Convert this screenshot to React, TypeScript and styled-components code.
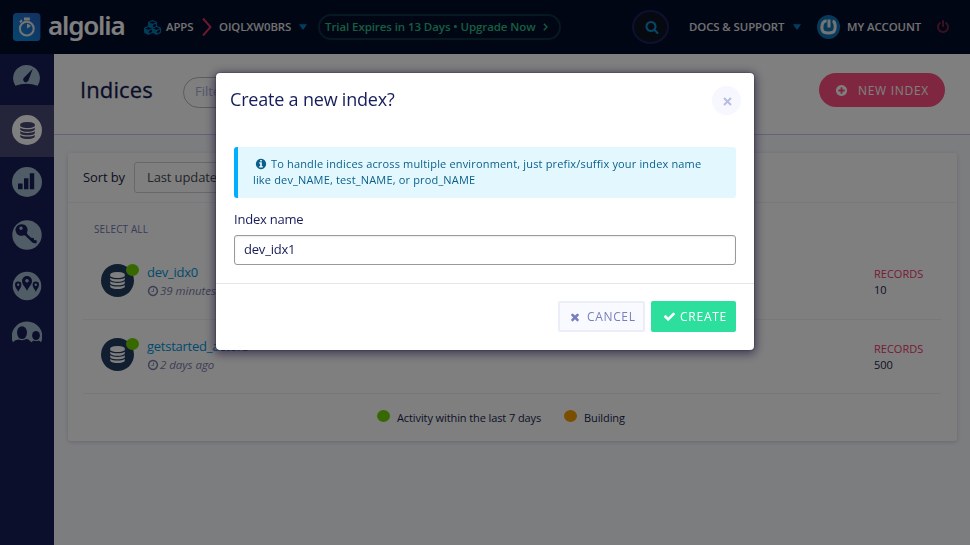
import React from "react";
import styled, { createGlobalStyle } from "styled-components";
import { FaCubes } from "react-icons/fa";

const GlobalStyle = createGlobalStyle`
  * { box-sizing: border-box; }
  body { margin: 0; font-family: "Open Sans", "Noto Sans", sans-serif; color: #21243d; overflow: hidden; }
  button, input { font-family: inherit; }
`;

/* ---------- icons ---------- */

const disc =
  "q0 209-103 385.5t-279.5 279.5-385.5 103-385.5-103-279.5-279.5-103-385.5 103-385.5 279.5-279.5 385.5-103 385.5 103 279.5 279.5 103 385.5z";

const glyphs = {
  check:
    "M1671 566q0 40-28 68l-724 724-136 136q-28 28-68 28t-68-28l-136-136-362-362q-28-28-28-68t28-68l136-136q28-28 68-28t68 28l294 295 656-657q28-28 68-28t68 28l136 136q28 28 28 68z",
  times:
    "M1490 1322q0 40-28 68l-136 136q-28 28-68 28t-68-28l-294-294-294 294q-28 28-68 28t-68-28l-136-136q-28-28-28-68t28-68l294-294-294-294q-28-28-28-68t28-68l136-136q28-28 68-28t68 28l294 294 294-294q28-28 68-28t68 28l136 136q28 28 28 68t-28 68l-294 294 294 294q28 28 28 68z",
  search:
    "M1216 832q0-185-131.5-316.5t-316.5-131.5-316.5 131.5-131.5 316.5 131.5 316.5 316.5 131.5 316.5-131.5 131.5-316.5zm512 832q0 52-38 90t-90 38q-54 0-90-38l-343-342q-179 124-399 124-143 0-273.5-55.5t-225-150-150-225-55.5-273.5 55.5-273.5 150-225 225-150 273.5-55.5 273.5 55.5 225 150 150 225 55.5 273.5q0 220-124 399l343 343q37 37 37 90z",
  power:
    "M1664 896q0 156-61 298t-164 245-245 164-298 61-298-61-245-164-164-245-61-298q0-182 80.5-343t226.5-270q43-32 95.5-25t83.5 50q32 42 24.5 94.5t-49.5 84.5q-98 74-151.5 181t-53.5 228q0 104 40.5 198.5t109.5 163.5 163.5 109.5 198.5 40.5 198.5-40.5 163.5-109.5 109.5-163.5 40.5-198.5q0-121-53.5-228t-151.5-181q-42-32-49.5-84.5t24.5-94.5q31-43 84-50t95 25q146 109 226.5 270t80.5 343zm-640-768v640q0 52-38 90t-90 38-90-38-38-90v-640q0-52 38-90t90-38 90 38 38 90z",
  plus:
    "M1344 960v-128q0-26-19-45t-45-19h-256v-256q0-26-19-45t-45-19h-128q-26 0-45 19t-19 45v256h-256q-26 0-45 19t-19 45v128q0 26 19 45t45 19h256v256q0 26 19 45t45 19h128q26 0 45-19t19-45v-256h256q26 0 45-19t19-45zm320-64" +
    disc,
  info:
    "M1152 1376v-160q0-14-9-23t-23-9h-96v-512q0-14-9-23t-23-9h-320q-14 0-23 9t-9 23v160q0 14 9 23t23 9h96v320h-96q-14 0-23 9t-9 23v160q0 14 9 23t23 9h448q14 0 23-9t9-23zm-128-896v-160q0-14-9-23t-23-9h-192q-14 0-23 9t-9 23v160q0 14 9 23t23 9h192q14 0 23-9t9-23zm640 416" +
    disc,
  clock:
    "M1024 544v448q0 14-9 23t-23 9h-320q-14 0-23-9t-9-23v-64q0-14 9-23t23-9h224v-352q0-14 9-23t23-9h64q14 0 23 9t9 23zm416 352q0-148-73-273t-198-198-273-73-273 73-198 198-73 273 73 273 198 198 273 73 273-73 198-198 73-273zm224 0" +
    disc,
  database:
    "M896 768q237 0 443-43t325-127v170q0 69-103 128t-280 93.5-385 34.5-385-34.5-280-93.5-103-128v-170q119 84 325 127t443 43zm0 768q237 0 443-43t325-127v170q0 69-103 128t-280 93.5-385 34.5-385-34.5-280-93.5-103-128v-170q119 84 325 127t443 43zm0-384q237 0 443-43t325-127v170q0 69-103 128t-280 93.5-385 34.5-385-34.5-280-93.5-103-128v-170q119 84 325 127t443 43zm0-1152q208 0 385 34.5t280 93.5 103 128v128q0 69-103 128t-280 93.5-385 34.5-385-34.5-280-93.5-103-128v-128q0-69 103-128t280-93.5 385-34.5z",
};

const IconSvg = styled.svg`
  display: block;
  flex: none;
  fill: currentColor;
`;

const Icon = ({ name, size }: { name: keyof typeof glyphs; size: number }) => (
  <IconSvg width={size} height={size} viewBox="0 0 1792 1792">
    <path d={glyphs[name]} />
  </IconSvg>
);

const Caret = () => (
  <IconSvg width="8" height="6" viewBox="0 0 8 6">
    <path d="M0 .3h8L4.5 5.4h-1z" />
  </IconSvg>
);

const LogoMark = () => (
  <IconSvg width="28" height="28" viewBox="0 0 28 28">
    <defs>
      <linearGradient id="tile" x1="0" y1="1" x2="1" y2="0">
        <stop offset="0" stopColor="#0a90e0" />
        <stop offset="1" stopColor="#2a5fc0" />
      </linearGradient>
    </defs>
    <rect x="0" y="0" width="27.4" height="28" rx="3.5" fill="url(#tile)" />
    <circle cx="13.8" cy="15.7" r="6.9" fill="none" stroke="#e8e8e8" strokeWidth="2" />
    <path d="M11 4.6h5.8v3H11zM6.3 8.6l2-2 1.4 1.4-2 2z" fill="#e8e8e8" />
    <path d="M14 15.6V10.8a4.8 4.8 0 0 1 3.9 2.4z" fill="#e8e8e8" />
  </IconSvg>
);

const GaugeIcon = () => (
  <IconSvg width="30" height="30" viewBox="0 0 30 30">
    <path d="M3.4 21.8A13.4 13.4 0 1 1 25.6 21.8Q14.5 17.6 3.4 21.8z" />
    <path d="M20.8 4.8 16.4 16.4a2.7 2.7 0 1 1-4.2-3z" fill="#171e58" />
  </IconSvg>
);

const BarsIcon = () => (
  <IconSvg width="30" height="30" viewBox="0 0 30 30">
    <circle cx="15" cy="15" r="15" />
    <path d="M6 16.6h4.6v5.6H6zM12 11.3h4.4v10.9H12zM17.8 6.2h4.4v16h-4.4z" fill="#171e58" />
  </IconSvg>
);

const KeyIcon = () => (
  <IconSvg width="30" height="30" viewBox="0 0 30 30">
    <circle cx="15" cy="15" r="14.7" />
    <path
      fillRule="evenodd"
      fill="#171e58"
      d="M9.5 4.2a5.8 5.8 0 1 0 2.4 11l1.2.2 7.6 7.3 3.7.9.4-3.2-2.7-.3-.5-2.2-2.6-.2-3.6-3.5-.4-1.7A5.8 5.8 0 0 0 9.5 4.2zM9 6.5a1.7 1.7 0 1 1 0 3.4 1.7 1.7 0 0 1 0-3.4z"
    />
  </IconSvg>
);

const PinsIcon = () => (
  <IconSvg width="30" height="30" viewBox="0 0 30 30">
    <circle cx="15" cy="15" r="14.3" />
    <g fill="#171e58">
      <path d="M15 19.9C13 15.5 10 13.7 10 10a5 5 0 0 1 10 0C20 13.7 17 15.5 15 19.9z" />
      <path d="M6.2 20.7C4.9 17.8 3 16.5 3 13.8a3.2 3.2 0 0 1 6.4 0C9.4 16.5 7.5 17.8 6.2 20.7z" />
      <path d="M23.8 20.7C22.5 17.8 20.6 16.5 20.6 13.8a3.2 3.2 0 0 1 6.4 0C27 16.5 25.1 17.8 23.8 20.7z" />
    </g>
    <circle cx="15" cy="9.7" r="1.8" />
    <circle cx="6.2" cy="13.8" r="1.2" />
    <circle cx="23.8" cy="13.8" r="1.2" />
  </IconSvg>
);

const PeopleIcon = () => (
  <IconSvg width="30" height="30" viewBox="0 3 30 30">
    <path d="M.9 25.2A15 15 0 0 1 14.5 4.4 15 15 0 0 1 29.1 25.2L27 23.6Q24.600 24.600 21.600 23.600L19.400 25.200 16.400 22.600Q14.500 21.400 13 22.600 10 24 6.800 22.600L3.400 23.200z" />
    <ellipse cx="10" cy="15.6" rx="5" ry="6.4" fill="#171e58" />
    <ellipse cx="24" cy="18.6" rx="3.9" ry="4.6" fill="#171e58" />
  </IconSvg>
);

const AvatarIcon = () => (
  <IconSvg width="23" height="24" viewBox="0 0 23 24">
    <ellipse cx="11.5" cy="12" rx="11.5" ry="12" fill="#0e74b4" />
    <path
      d="M9.6 6C4 5.800 4.200 14.500 6.300 16.800Q11.500 19.400 16.700 16.800C18.800 14.500 19 6.800 15.600 6.200M12 4.600V12.500"
      fill="none"
      stroke="#e4e8ea"
      strokeWidth="3"
    />
  </IconSvg>
);

/* ---------- page frame ---------- */

const Page = styled.div`
  height: 545px;
  display: flex;
  flex-direction: column;
  background: #f9faff;
`;

const Header = styled.header`
  height: 54px;
  flex: none;
  display: flex;
  align-items: center;
  padding-left: 13px;
  background: #030c29;
  color: #e2e2e2;
  font-size: 11.4px;
  font-weight: 650;
  letter-spacing: -0.08px;
  white-space: nowrap;
`;

const Brand = styled.div`
  width: 131px;
  display: flex;
  align-items: center;
  gap: 7px;
`;

const Wordmark = styled.span`
  display: block;
  width: 76px;
  height: 32px;
  font-family: "Noto Sans", "Open Sans", sans-serif;
  font-size: 26px;
  line-height: 28px;
  font-weight: 600;
  letter-spacing: -1.2px;
  color: #fff;
`;

const Slot = styled.div<{ $w: number; $color?: string }>`
  width: ${(p) => p.$w}px;
  flex: none;
  display: flex;
  align-items: center;
  color: ${(p) => p.$color ?? "inherit"};
`;

const HeaderText = styled(Slot)`
  padding-bottom: 1px;
`;

const TrialPill = styled.div`
  width: 243px;
  height: 26px;
  flex: none;
  display: flex;
  align-items: center;
  gap: 8px;
  padding: 0 0 1px 5px;
  border: 2px solid #0d3040;
  border-radius: 13px;
  color: #2bbd82;
  font-size: 11.5px;
  font-weight: 600;
`;

const SearchButton = styled.div`
  width: 37px;
  height: 34px;
  flex: none;
  display: flex;
  align-items: center;
  justify-content: center;
  margin: 0 20px 0 71px;
  padding-left: 2px;
  border: 2px solid #1d2062;
  border-radius: 50%;
  background: #0c1420;
  color: #0d8cd0;
`;

const Body = styled.div`
  flex: 1;
  display: flex;
  min-height: 0;
`;

const Sidebar = styled.nav`
  width: 54px;
  flex: none;
  background: #171e58;
  color: #a0b9cc;
`;

const NavItem = styled.div<{ $active?: boolean; $h: number; $lift?: number }>`
  height: ${(p) => p.$h}px;
  padding-bottom: ${(p) => p.$lift ?? 0}px;
  display: flex;
  align-items: center;
  justify-content: center;
  background: ${(p) => (p.$active ? "#484b76" : "transparent")};
`;

const Round = styled.div<{ $size: number; $bg: string; $fg: string }>`
  width: ${(p) => p.$size}px;
  height: ${(p) => p.$size}px;
  border-radius: 50%;
  display: flex;
  align-items: center;
  justify-content: center;
  background: ${(p) => p.$bg};
  color: ${(p) => p.$fg};
`;

const CloseButton = styled(Round)`
  padding: 2px 0 0 1px;
`;

const Main = styled.main`
  flex: 1;
  min-width: 0;
`;

const TitleBar = styled.div`
  height: 81px;
  display: flex;
  align-items: flex-start;
  padding: 19px 25px 0 26px;
  background: #fff;
  border-bottom: 1px solid #c9c4fa;
`;

const PageTitle = styled.h1`
  width: 103px;
  margin: 1px 0 0;
  font-size: 22px;
  line-height: 30px;
  font-weight: 500;
  letter-spacing: 0.1px;
  -webkit-text-stroke: 0.3px #141b52;
  color: #141b52;
`;

const FilterBox = styled.div`
  width: 220px;
  height: 31px;
  margin-top: 4px;
  padding-left: 11px;
  border: 1px solid #b8b8b8;
  border-radius: 16px;
  font-size: 13px;
  line-height: 26px;
  color: #a5afd5;
`;

const NewIndexButton = styled.div`
  width: 126px;
  height: 34px;
  margin-left: auto;
  display: flex;
  align-items: center;
  gap: 10px;
  padding-left: 16px;
  border-radius: 17px;
  background: #ff4f81;
  color: #fff;
  font-size: 12px;
  letter-spacing: 0.7px;
`;

const Card = styled.section`
  width: 889px;
  height: 288px;
  margin: 18px 0 0 14px;
  border-radius: 3px;
  background: #fff;
  box-shadow: 0 1px 4px rgba(40, 50, 110, 0.2);
`;

const SortBar = styled.div`
  height: 50px;
  display: flex;
  align-items: center;
  padding-left: 15px;
  border-bottom: 1px solid #f0f1f8;
  font-size: 13px;
  letter-spacing: -0.12px;
`;

const SortLabel = styled.span`
  width: 51px;
  margin-top: -2px;
`;

const SortSelect = styled.div`
  width: 180px;
  height: 31px;
  padding-left: 12px;
  border: 1px solid #d0d0d0;
  border-radius: 3px;
  line-height: 29px;
  color: #4a4a55;
`;

const SelectAll = styled.div`
  height: 40px;
  padding: 19px 0 0 26px;
  font-size: 10px;
  line-height: 14px;
  letter-spacing: 0.1px;
  color: #7178b5;
  font-weight: 500;
`;

const IndexRow = styled.div<{ $h: number }>`
  height: ${(p) => p.$h}px;
  margin: 0 16px 0 15px;
  padding-left: 18px;
  display: flex;
  align-items: flex-end;
  border-bottom: 1px solid #f0f1f6;
`;

const IndexBadge = styled.div`
  position: relative;
  width: 46px;
  margin-bottom: 22px;
`;

const ActivityDot = styled.span`
  position: absolute;
  top: 0;
  left: 25px;
  width: 13px;
  height: 12px;
  border-radius: 50%;
  background: #6fd300;
`;

const IndexInfo = styled.div`
  width: 727px;
  margin-bottom: 20px;
`;

const IndexName = styled.div`
  font-size: 13px;
  line-height: 19px;
  letter-spacing: -0.25px;
  color: #0095dc;
`;

const IndexAge = styled.div`
  display: flex;
  align-items: center;
  gap: 1px;
  font-size: 11.5px;
  line-height: 17px;
  letter-spacing: -0.04px;
  font-style: italic;
  color: #7b80ab;
`;

const Records = styled.div<{ $h: number }>`
  height: ${(p) => p.$h}px;
  font-size: 11px;
  line-height: 16px;
  font-weight: 500;
  color: #1a1e4d;
`;

const RecordsLabel = styled.div`
  color: #f0346b;
  font-weight: 400;
`;

const Legend = styled.div`
  display: flex;
  height: 47px;
  align-items: center;
  padding-left: 309px;
  font-size: 11px;
  letter-spacing: -0.1px;
  color: #1a1e4d;
`;

const LegendDot = styled.span<{ $color: string }>`
  width: 13px;
  height: 12px;
  margin: -3px 7px 0 0;
  border-radius: 50%;
  background: ${(p) => p.$color};
`;

const LegendText = styled.span<{ $w?: number }>`
  width: ${(p) => (p.$w ? `${p.$w}px` : "auto")};
`;

/* ---------- dialog ---------- */

const Backdrop = styled.div`
  position: fixed;
  inset: 0;
  display: flex;
  justify-content: center;
  align-items: flex-start;
  padding-top: 73px;
  background: rgba(0, 0, 0, 0.5);
`;

const Dialog = styled.div`
  width: 538px;
  height: 277px;
  border-radius: 4px;
  background: #fff;
  box-shadow: 0 2px 10px 2px rgba(25, 15, 55, 0.6), 0 0 2px rgba(0, 0, 0, 0.6);
  color: #161d5a;
`;

const DialogHead = styled.div`
  height: 74px;
  display: flex;
  justify-content: space-between;
  align-items: flex-start;
  padding: 13px 13px 0 14px;
`;

const DialogTitle = styled.h2`
  margin: 0;
  font-size: 18px;
  line-height: 27px;
  font-weight: 400;
  letter-spacing: -0.2px;
`;

const DialogBody = styled.div`
  height: 137px;
  padding: 0 18px;
  border-bottom: 1px solid #e4e5ea;
`;

const Notice = styled.div`
  height: 51px;
  padding: 9px 15px;
  border-left: 4px solid #00aeff;
  border-radius: 3px;
  background: #e3f7ff;
  color: #0a5f8a;
  font-size: 11px;
  line-height: 16px;
  letter-spacing: 0.16px;
  white-space: nowrap;
`;

const NoticeLine = styled.div`
  display: flex;
  align-items: center;
  gap: 4px;
  padding-left: 2px;
`;

const FieldLabel = styled.label`
  display: block;
  height: 37px;
  padding-top: 11px;
  font-size: 13px;
  line-height: 20px;
  letter-spacing: -0.22px;
`;

const Field = styled.input`
  display: block;
  width: 100%;
  height: 30px;
  padding: 0 9px 3px;
  border: 1px solid #999;
  border-radius: 3px;
  outline: none;
  background: #fff;
  box-shadow: inset 0 1px 2px rgba(0, 0, 0, 0.08);
  font-size: 13px;
  letter-spacing: -0.2px;
  color: #161d5a;
`;

const DialogFoot = styled.div`
  display: flex;
  justify-content: flex-end;
  gap: 6px;
  padding: 17px 18px 0 0;
`;

const Button = styled.button<{ $primary?: boolean }>`
  width: ${(p) => (p.$primary ? 85 : 87)}px;
  height: 31px;
  display: flex;
  align-items: center;
  gap: ${(p) => (p.$primary ? 4 : 6)}px;
  padding: ${(p) => (p.$primary ? "0 0 0 12px" : "0 0 0 9px")};
  border: ${(p) => (p.$primary ? "0" : "2px solid #ebeef8")};
  border-radius: 2px;
  background: ${(p) => (p.$primary ? "#2ddf9c" : "#f9faff")};
  color: ${(p) => (p.$primary ? "#fff" : "#777fbd")};
  font-size: 12px;
  letter-spacing: ${(p) => (p.$primary ? 0.75 : 0.65)}px;
`;

const indices = [
  { name: "dev_idx0", age: "39 minutes ago", records: 10, height: 77, recordsHeight: 53 },
  { name: "getstarted_actors", age: "2 days ago", records: 500, height: 74, recordsHeight: 52 },
];

export default function App() {
  return (
    <>
      <GlobalStyle />
      <Page>
        <Header>
          <Brand>
            <LogoMark />
            <Wordmark>algolia</Wordmark>
          </Brand>
          <Slot $w={22} $color="#0077b0"><FaCubes size={17} /></Slot>
          <HeaderText $w={35}>APPS</HeaderText>
          <Slot $w={18}>
            <IconSvg width="12" height="20" viewBox="0 0 12 20">
              <path d="M2 1.5 9.5 10 2 18.5" fill="none" stroke="#d8325f" strokeWidth="1.9" />
            </IconSvg>
          </Slot>
          <HeaderText $w={80}>OIQLXW0BRS</HeaderText>
          <Slot $w={19} $color="#007cba"><Caret /></Slot>
          <TrialPill>
            <span>Trial Expires in 13 Days • Upgrade Now</span>
            <IconSvg width="5" height="8" viewBox="0 0 5 8">
              <path d="M.8 .8 4 4 .8 7.2" fill="none" stroke="currentColor" strokeWidth="1.3" />
            </IconSvg>
          </TrialPill>
          <SearchButton><Icon name="search" size={14} /></SearchButton>
          <HeaderText $w={104}>DOCS &amp; SUPPORT</HeaderText>
          <Slot $w={24} $color="#007cba"><Caret /></Slot>
          <Slot $w={30}><AvatarIcon /></Slot>
          <HeaderText $w={89}>MY ACCOUNT</HeaderText>
          <Slot $w={15} $color="#75203f"><Icon name="power" size={14} /></Slot>
        </Header>
        <Body>
          <Sidebar>
            <NavItem $h={51} $lift={2}><GaugeIcon /></NavItem>
            <NavItem $h={52} $active $lift={2}>
              <Round $size={30} $bg="#fff" $fg="#484b76"><Icon name="database" size={17} /></Round>
            </NavItem>
            <NavItem $h={51} $lift={1}><BarsIcon /></NavItem>
            <NavItem $h={53}><KeyIcon /></NavItem>
            <NavItem $h={50}><PinsIcon /></NavItem>
            <NavItem $h={48}><PeopleIcon /></NavItem>
          </Sidebar>
          <Main>
            <TitleBar>
              <PageTitle>Indices</PageTitle>
              <FilterBox>Filter indices</FilterBox>
              <NewIndexButton>
                <Icon name="plus" size={13} />
                <span>NEW INDEX</span>
              </NewIndexButton>
            </TitleBar>
            <Card>
              <SortBar>
                <SortLabel>Sort by</SortLabel>
                <SortSelect>Last updated</SortSelect>
              </SortBar>
              <SelectAll>SELECT ALL</SelectAll>
              {indices.map((it) => (
                <IndexRow key={it.name} $h={it.height}>
                  <IndexBadge>
                    <Round $size={33} $bg="#213d5e" $fg="#fff"><Icon name="database" size={17} /></Round>
                    <ActivityDot />
                  </IndexBadge>
                  <IndexInfo>
                    <IndexName>{it.name}</IndexName>
                    <IndexAge>
                      <Icon name="clock" size={12} />
                      <span>{it.age}</span>
                    </IndexAge>
                  </IndexInfo>
                  <Records $h={it.recordsHeight}>
                    <RecordsLabel>RECORDS</RecordsLabel>
                    {it.records}
                  </Records>
                </IndexRow>
              ))}
              <Legend>
                <LegendDot $color="#6fd300" />
                <LegendText $w={167}>Activity within the last 7 days</LegendText>
                <LegendDot $color="#f59b00" />
                <LegendText>Building</LegendText>
              </Legend>
            </Card>
          </Main>
        </Body>
      </Page>
      <Backdrop>
        <Dialog role="dialog">
          <DialogHead>
            <DialogTitle>Create a new index?</DialogTitle>
            <CloseButton $size={29} $bg="#f6f7ff" $fg="#b6bcdf">
              <IconSvg width="9" height="9" viewBox="0 0 9 9">
                <path d="M1 1l7 7M8 1l-7 7" stroke="currentColor" strokeWidth="1.9" />
              </IconSvg>
            </CloseButton>
          </DialogHead>
          <DialogBody>
            <Notice>
              <NoticeLine>
                <Icon name="info" size={12} />
                <span>To handle indices across multiple environment, just prefix/suffix your index name</span>
              </NoticeLine>
              like dev_NAME, test_NAME, or prod_NAME
            </Notice>
            <FieldLabel htmlFor="index-name">Index name</FieldLabel>
            <Field id="index-name" defaultValue="dev_idx1" />
          </DialogBody>
          <DialogFoot>
            <Button>
              <Icon name="times" size={12} />
              CANCEL
            </Button>
            <Button $primary>
              <Icon name="check" size={13} />
              CREATE
            </Button>
          </DialogFoot>
        </Dialog>
      </Backdrop>
    </>
  );
}
